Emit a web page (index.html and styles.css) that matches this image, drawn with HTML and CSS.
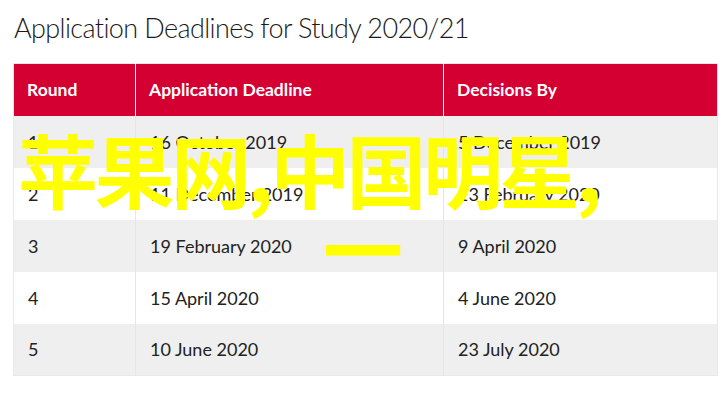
FILE: index.html
```html
<!DOCTYPE html>
<html lang="en">
<head>
<meta charset="utf-8">
<title>Application Deadlines</title>
<link rel="stylesheet" href="styles.css">
</head>
<body>
<div class="page">
  <h1 class="title">Application Deadlines for Study 2020/21</h1>
  <table class="deadlines">
    <thead>
      <tr>
        <th class="c1">Round</th>
        <th class="c2">Application Deadline</th>
        <th class="c3">Decisions By</th>
      </tr>
    </thead>
    <tbody>
      <tr><td>1</td><td>16 October 2019</td><td>5 December 2019</td></tr>
      <tr><td>2</td><td>11 December 2019</td><td>13 February 2020</td></tr>
      <tr><td>3</td><td>19 February 2020</td><td>9 April 2020</td></tr>
      <tr><td>4</td><td>15 April 2020</td><td>4 June 2020</td></tr>
      <tr><td>5</td><td>10 June 2020</td><td>23 July 2020</td></tr>
    </tbody>
  </table>
  <div class="overlay"><span class="line1">苹果网,中国明星,</span><span class="line2">一</span></div>
</div>
</body>
</html>
```

FILE: styles.css
```css
html, body {
  margin: 0;
  padding: 0;
  background: #ffffff;
}
.page {
  position: relative;
  padding: 9px 10px 0 13px;
  font-family: "Lato", "Liberation Sans", sans-serif;
  color: #222222;
}
.title {
  margin: 0 0 16px 1px;
  font-size: 27px;
  font-weight: 300;
  line-height: 38px;
  color: #1a1a1a;
  letter-spacing: -0.6px;
}
.deadlines {
  width: 705px;
  border-collapse: collapse;
  border: 1px solid #e8e8e8;
}
.deadlines th {
  background: #d50032;
  color: #ffffff;
  font-weight: 700;
  font-size: 17.5px;
  text-align: left;
  height: 52px;
  padding: 0 0 0 13px;
  border-left: 1px solid #ffffff;
  box-sizing: border-box;
}
.deadlines th:first-child { border-left: none; }
.deadlines .c1 { width: 122px; }
.deadlines .c2 { width: 308px; }
.deadlines td {
  height: 52px;
  padding: 0 0 0 14px;
  font-size: 18px;
  border-left: 1px solid #e6e6e6;
  box-sizing: border-box;
  color: #222222;
}
.deadlines td:first-child { border-left: none; }
.deadlines tbody tr:nth-child(odd) td { background: #efefef; }
.deadlines tbody tr:nth-child(even) td { background: #ffffff; }
.overlay {
  position: absolute;
  left: 18px;
  top: 128px;
  font-family: "Noto Sans CJK SC", sans-serif;
  font-weight: 700;
  font-size: 80px;
  line-height: 79px;
  letter-spacing: -3.5px;
  color: #ffff00;
  white-space: nowrap;
}
.overlay .line1 { display: block; }
.overlay .line2 { display: block; padding-left: 305px; }
```
